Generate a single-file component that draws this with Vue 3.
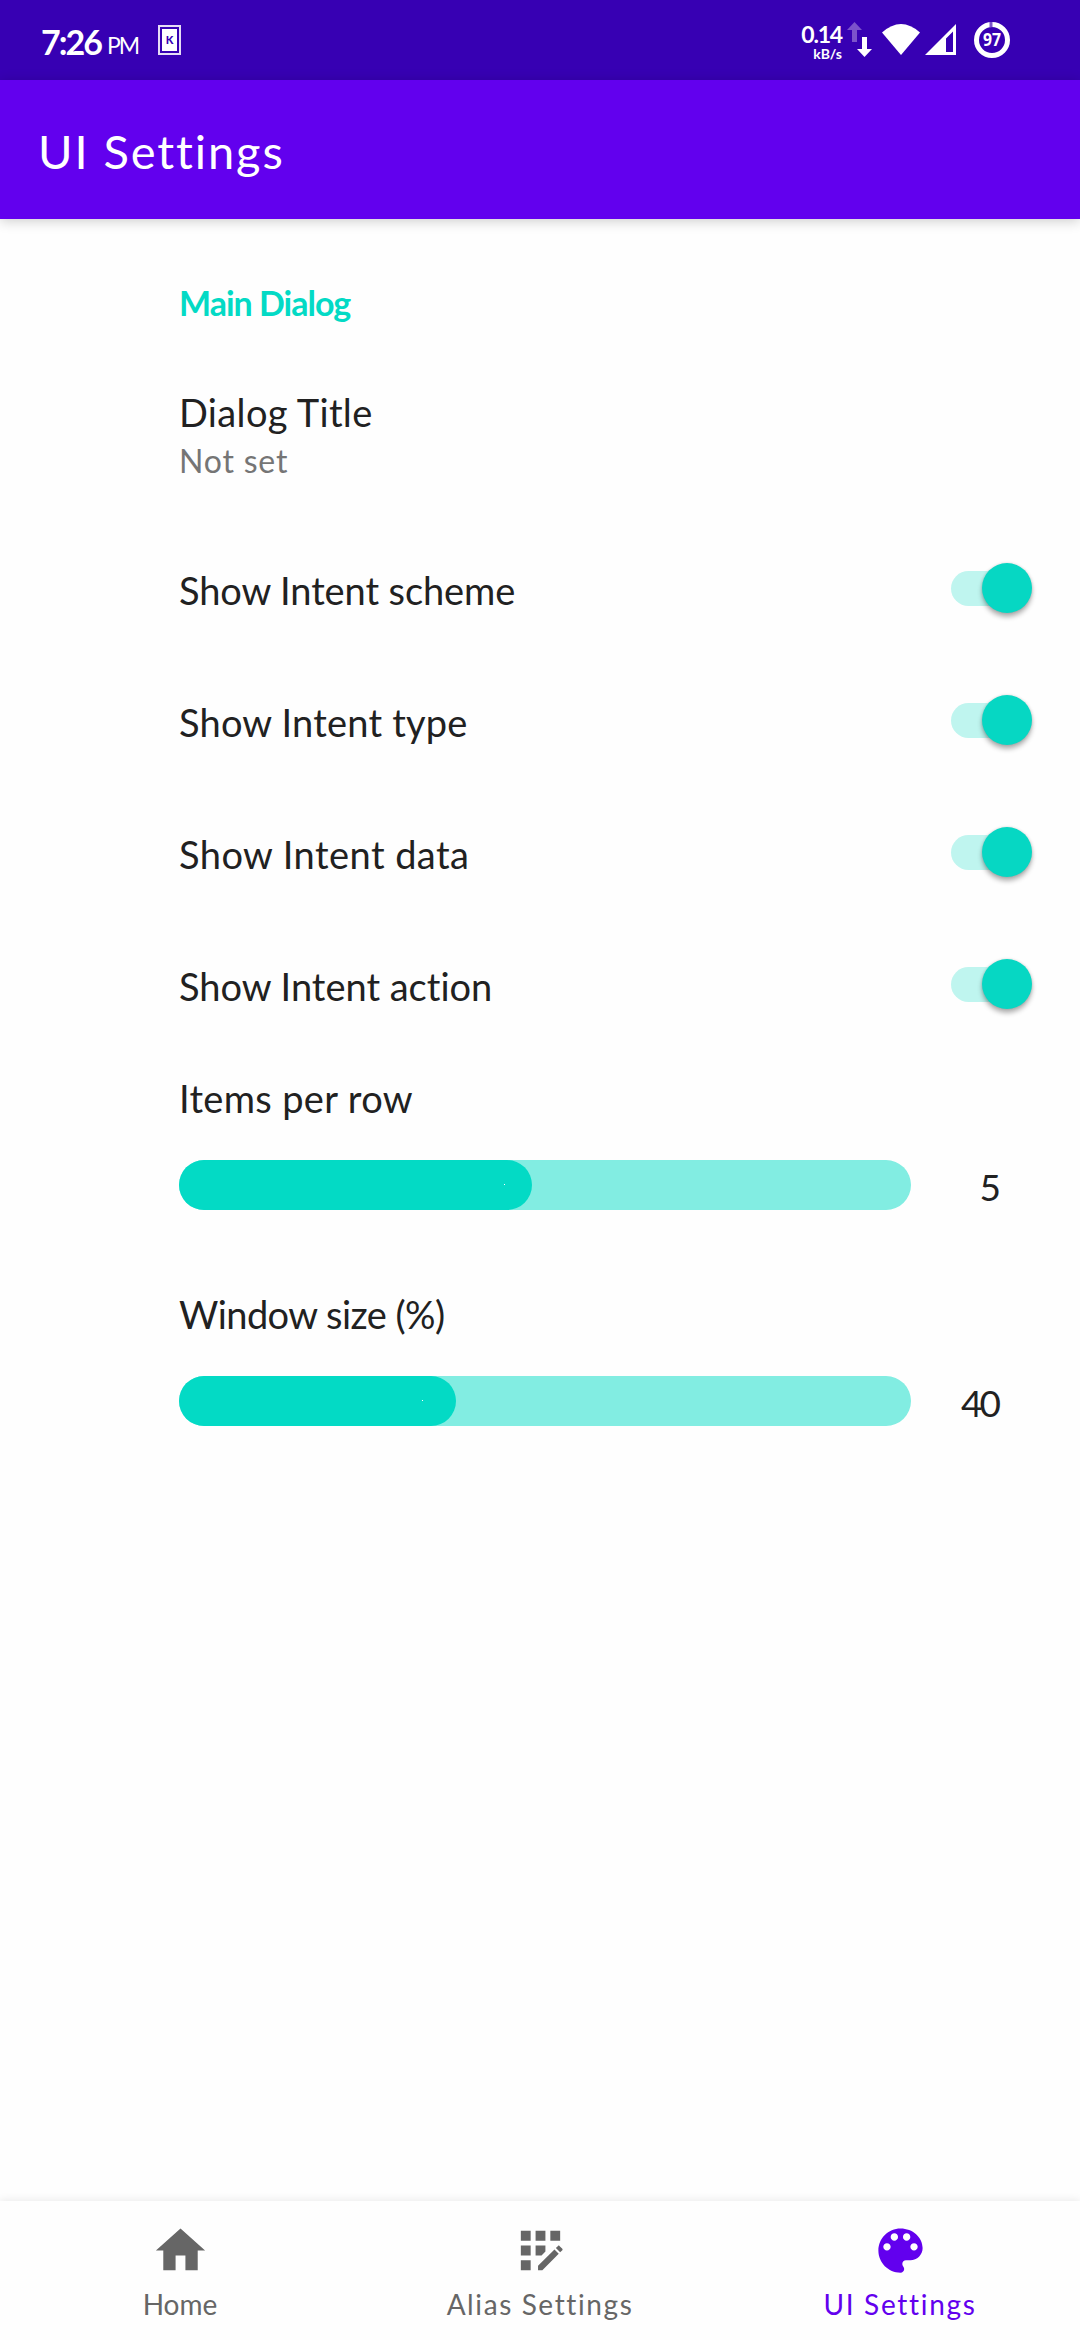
<script setup>
import { ref } from 'vue'

const switches = ref([
  { label: 'Show Intent scheme', cls: 'w-scheme' },
  { label: 'Show Intent type', cls: 'w-type' },
  { label: 'Show Intent data', cls: 'w-data' },
  { label: 'Show Intent action', cls: 'w-action' },
])

const sliders = ref([
  { label: 'Items per row', value: 5, fill: 353, cls: 'w-items' },
  { label: 'Window size (%)', value: 40, fill: 277, cls: 'w-window' },
])
</script>

<template>
  <div class="screen">
    <header class="status">
      <span class="clock">7:26</span>
      <span class="ampm">PM</span>
      <svg class="k-icon" width="23" height="30" viewBox="0 0 23 30">
        <rect x="1" y="1" width="21" height="28" fill="none" stroke="#e6dcf6" stroke-width="2" />
        <rect x="4" y="4" width="15" height="22" fill="#fff" />
        <text x="11.6" y="18.5" text-anchor="middle" class="k-text">K</text>
      </svg>
      <span class="spacer"></span>
      <span class="net">
        <span class="rate">0.14</span>
        <span class="unit">kB/s</span>
      </span>
      <svg class="arrows" width="26" height="36" viewBox="0 0 26 36">
        <path d="M7.500 0L15 8h-5v12H5V8H0z" fill="#7c52cb" />
        <path d="M15 15h5v12h5l-7.500 8L10 27h5z" fill="#fff" />
      </svg>
      <svg class="wifi" width="38" height="31" viewBox="0 0 38 31">
        <path d="M0 8.500Q19-8.500 38 8.500L19 31z" fill="#fff" />
      </svg>
      <svg class="signal" width="31" height="31" viewBox="0 0 31 31">
        <path d="M31 0v31H0zM28 7.500l-7 7V28h7z" fill="#fff" fill-rule="evenodd" />
      </svg>
      <svg class="battery" width="36" height="36" viewBox="0 0 36 36">
        <circle cx="18" cy="18" r="15.500" fill="none" stroke="#fff" stroke-width="5" />
        <path d="M15.500 0h3v5.200h-3z" fill="#7c52cb" />
        <text x="18" y="24" text-anchor="middle" class="battery-text" textLength="18" lengthAdjust="spacingAndGlyphs">97</text>
      </svg>
    </header>

    <div class="appbar"><h1>UI Settings</h1></div>

    <main>
      <h2>Main Dialog</h2>
      <section class="dialog-pref">
        <div class="label w-dialog">Dialog Title</div>
        <div class="summary">Not set</div>
      </section>

      <section v-for="s in switches" :key="s.label" class="switch-row">
        <span class="label" :class="s.cls">{{ s.label }}</span>
        <span class="switch"><i class="thumb"></i></span>
      </section>

      <section v-for="s in sliders" :key="s.label" class="slider-pref" :class="s.cls">
        <div class="label">{{ s.label }}</div>
        <div class="slider-row">
          <div class="track">
            <div class="fill" :style="{ width: s.fill + 'px' }"><i class="dot"></i></div>
          </div>
          <span class="value">{{ s.value }}</span>
        </div>
      </section>
    </main>

    <nav>
      <a class="item">
        <svg viewBox="0 0 24 24"><path d="M10 20v-6h4v6h5v-8h3L12 3 2 12h3v8z" /></svg>
        <span class="n-home">Home</span>
      </a>
      <a class="item">
        <svg viewBox="0 0 24 24">
          <path d="M10 4h4v4h-4zM4 16h4v4H4zM4 10h4v4H4zM4 4h4v4H4zM16 4h4v4h-4zM14 12.420V10h-4v4h2.420zM20.880 11.290l-1.170-1.170c-.16-.16-.42-.16-.58 0l-.88.88L20 12.750l.88-.88c.16-.16.16-.42 0-.58zM11 18.250V20h1.750l6.670-6.670-1.750-1.750z" />
        </svg>
        <span class="n-alias">Alias Settings</span>
      </a>
      <a class="item active">
        <svg viewBox="0 0 24 24">
          <path d="M12 3c-4.970 0-9 4.030-9 9s4.030 9 9 9c.83 0 1.500-.67 1.500-1.500 0-.39-.15-.74-.39-1.010-.23-.26-.38-.61-.38-.99 0-.83.67-1.500 1.500-1.500H16c2.760 0 5-2.240 5-5 0-4.420-4.030-8-9-8zm-5.500 9c-.83 0-1.500-.67-1.500-1.500S5.670 9 6.500 9 8 9.670 8 10.500 7.330 12 6.500 12zm3-4C8.670 8 8 7.330 8 6.500S8.670 5 9.500 5s1.500.67 1.500 1.500S10.330 8 9.500 8zm5 0c-.83 0-1.500-.67-1.500-1.500S13.670 5 14.500 5s1.500.67 1.500 1.500S15.330 8 14.500 8zm3 4c-.83 0-1.500-.67-1.500-1.500S16.670 9 17.500 9s1.500.67 1.500 1.500-.67 1.500-1.500 1.500z" />
        </svg>
        <span class="n-ui">UI Settings</span>
      </a>
    </nav>
  </div>
</template>

<style>
body {
  margin: 0;
  background: #fefefe;
}
</style>

<style scoped>
.screen {
  width: 1080px;
  height: 2340px;
  display: flex;
  flex-direction: column;
  background: #fefefe;
  color: #212121;
  font-family: Lato, "Open Sans", sans-serif;
  font-variant-ligatures: none;
  overflow: hidden;
  white-space: nowrap;
}

.status {
  flex: none;
  box-sizing: border-box;
  height: 80px;
  padding: 0 70px 0 41px;
  display: flex;
  align-items: flex-start;
  background: #3700b3;
  color: #fff;
}
.clock {
  width: 66px;
  margin-top: 22px;
  font-size: 34px;
  line-height: 40px;
  font-weight: 700;
  letter-spacing: -2px;
}
.ampm {
  width: 51px;
  margin-top: 30px;
  font-size: 23px;
  line-height: 30px;
  letter-spacing: -2px;
}
.k-icon { margin-top: 25px; }
.k-text {
  font: 900 11px Lato, sans-serif;
  fill: #3700b3;
}
.spacer { flex: 1; }
.net {
  display: flex;
  flex-direction: column;
  align-items: flex-end;
  width: 46px;
  margin-top: 22px;
  margin-right: 5px;
}
.rate {
  font-size: 23px;
  line-height: 24px;
  font-weight: 700;
  letter-spacing: -1.2px;
}
.unit {
  font-size: 14px;
  line-height: 15px;
  font-weight: 700;
}
.arrows { margin-top: 22px; }
.wifi { margin: 24px 0 0 9px; }
.signal { margin: 24px 0 0 5px; }
.battery { margin: 22px 0 0 18px; }
.battery-text {
  font: 700 17px "Noto Sans", sans-serif;
  fill: #fff;
}

.appbar {
  flex: none;
  height: 139px;
  display: flex;
  align-items: center;
  padding-left: 38px;
  background: #6200ee;
  color: #fff;
  box-shadow: 0 2px 12px rgba(0, 0, 0, 0.2);
}
h1 {
  margin: 3px 0 0;
  font-size: 47px;
  line-height: 56px;
  font-weight: 400;
  letter-spacing: 1.9px;
}

main {
  flex: 1;
  padding: 0 47px 0 179px;
}
h2 {
  margin: 0;
  padding-top: 64px;
  height: 92px;
  font-size: 34px;
  line-height: 40px;
  font-weight: 700;
  letter-spacing: -1px;
  color: #03dac5;
}
.label {
  font-size: 38px;
  line-height: 46px;
}
.w-dialog { letter-spacing: 0.35px; }
.w-scheme { letter-spacing: -0.1px; }
.w-type { letter-spacing: 0.2px; }
.w-data { letter-spacing: 0.45px; }
.w-items .label { letter-spacing: 0.35px; }
.w-window .label { letter-spacing: -0.55px; }
.dialog-pref {
  height: 133px;
  padding-top: 14px;
}
.summary {
  font-size: 32px;
  line-height: 52px;
  color: #757575;
  letter-spacing: 0.8px;
}
.switch-row {
  height: 132px;
  display: flex;
  align-items: center;
  justify-content: space-between;
}
.switch-row .label { padding-top: 3px; }
.switch {
  width: 82px;
  height: 35px;
  border-radius: 18px;
  background: linear-gradient(to right, #bff5ef 65px, transparent 65px);
  display: flex;
  align-items: center;
  justify-content: flex-end;
}
.thumb {
  width: 50px;
  height: 50px;
  margin-right: 1px;
  border-radius: 50%;
  background: #06d7c3;
  box-shadow: 0 4px 5px rgba(0, 0, 0, 0.3), 0 0 3px rgba(0, 0, 0, 0.15);
}

.slider-pref {
  height: 216px;
  padding-top: 25px;
  box-sizing: border-box;
}
.slider-row {
  display: flex;
  align-items: center;
  margin-top: 39px;
}
.track {
  width: 732px;
  height: 50px;
  border-radius: 25px;
  background: #82ede2;
}
.fill {
  height: 50px;
  border-radius: 25px;
  background: #03dac5;
  display: flex;
  justify-content: flex-end;
}
.dot {
  width: 1px;
  height: 1px;
  margin: 24px 27px 0 0;
  background: #fff;
}
.w-window .dot { margin-right: 33px; }
.value {
  width: 87px;
  text-align: right;
  padding-top: 3px;
  font-size: 37px;
  line-height: 46px;
  letter-spacing: -3px;
}

nav {
  flex: none;
  height: 139px;
  display: flex;
  background: #fefefe;
  box-shadow: 0 0 9px rgba(0, 0, 0, 0.1);
}
.item {
  flex: 1;
  display: flex;
  flex-direction: column;
  align-items: center;
  color: #666;
  font-size: 28px;
  line-height: 34px;
}
.item svg {
  width: 59px;
  height: 59px;
  margin: 20px 0 7px;
  fill: currentColor;
}
.item.active { color: #6200ee; }
.n-alias { letter-spacing: 1.6px; }
.n-ui { letter-spacing: 1.7px; }
</style>
